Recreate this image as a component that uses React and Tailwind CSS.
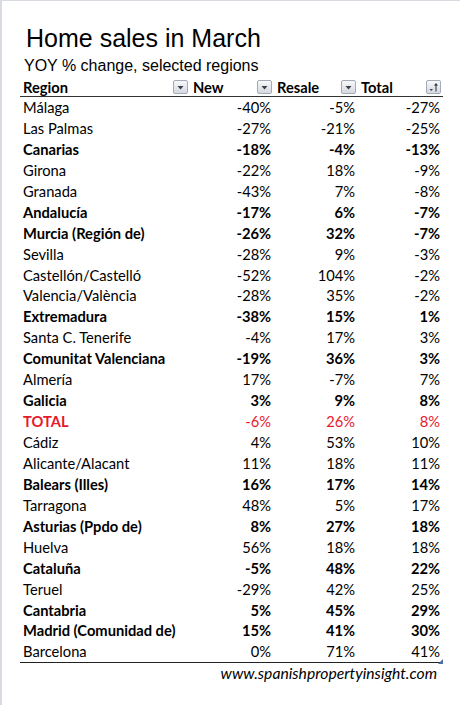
import React from 'react';

const rows = [
  ['Málaga', '-40%', '-5%', '-27%'],
  ['Las Palmas', '-27%', '-21%', '-25%'],
  ['Canarias', '-18%', '-4%', '-13%', 'b'],
  ['Girona', '-22%', '18%', '-9%'],
  ['Granada', '-43%', '7%', '-8%'],
  ['Andalucía', '-17%', '6%', '-7%', 'b'],
  ['Murcia (Región de)', '-26%', '32%', '-7%', 'b'],
  ['Sevilla', '-28%', '9%', '-3%'],
  ['Castellón/Castelló', '-52%', '104%', '-2%'],
  ['Valencia/València', '-28%', '35%', '-2%'],
  ['Extremadura', '-38%', '15%', '1%', 'b'],
  ['Santa C. Tenerife', '-4%', '17%', '3%'],
  ['Comunitat Valenciana', '-19%', '36%', '3%', 'b'],
  ['Almería', '17%', '-7%', '7%'],
  ['Galicia', '3%', '9%', '8%', 'b'],
  ['TOTAL', '-6%', '26%', '8%', 'total'],
  ['Cádiz', '4%', '53%', '10%'],
  ['Alicante/Alacant', '11%', '18%', '11%'],
  ['Balears (Illes)', '16%', '17%', '14%', 'b'],
  ['Tarragona', '48%', '5%', '17%'],
  ['Asturias (Ppdo de)', '8%', '27%', '18%', 'b'],
  ['Huelva', '56%', '18%', '18%'],
  ['Cataluña', '-5%', '48%', '22%', 'b'],
  ['Teruel', '-29%', '42%', '25%'],
  ['Cantabria', '5%', '45%', '29%', 'b'],
  ['Madrid (Comunidad de)', '15%', '41%', '30%', 'b'],
  ['Barcelona', '0%', '71%', '41%'],
];

const FilterButton = ({ sort }) => (
  <span className="flex h-[14px] w-[15px] items-center justify-center rounded-[2px] border border-[#a3abb8] bg-gradient-to-b from-[#f7f8fa] to-[#d5d9e0]">
    {sort ? (
      <svg width="11" height="11" viewBox="0 0 11 11">
        <path d="M1.5 7 L5 7 L3.25 9 Z" fill="#3a3f48" />
        <path d="M8 9.5 V2 M6.6 3.6 L8 1.8 L9.4 3.6" stroke="#3a3f48" strokeWidth="1.1" fill="none" />
      </svg>
    ) : (
      <svg width="9" height="9" viewBox="0 0 9 9">
        <path d="M1.5 3 L7.5 3 L4.5 6.5 Z" fill="#3a3f48" />
      </svg>
    )}
  </span>
);

const HeaderCell = ({ label, sort }) => (
  <div className="flex items-center justify-between pl-[3px] pr-[2px]">
    <span className="leading-[22px]">{label}</span>
    <FilterButton sort={sort} />
  </div>
);

const App = () => {
  return (
    <div className="h-[705px] w-[460px] overflow-hidden border-l-2 border-t border-[#d9dbe2] bg-white pl-[18px] text-black">
      <div className="pt-[23px] pl-[6px] font-['Liberation_Sans',Arial,sans-serif] text-[25px] leading-[28px]">
        Home sales in March
      </div>
      <div className="mt-[4px] pl-[4px] font-['Liberation_Sans',Arial,sans-serif] text-[16px] leading-[20px]">
        YOY % change, selected regions
      </div>
      <div className="w-[423px] font-['Lato','Noto_Sans',sans-serif] text-[14.7px]">
        <div className="grid h-[21px] grid-cols-[170px_84px_84px_85px] border-b-[1.5px] border-[#333] font-bold">
          <HeaderCell label="Region" />
          <HeaderCell label="New" />
          <HeaderCell label="Resale" />
          <HeaderCell label="Total" sort />
        </div>
        <div className="relative border-b-[1.5px] border-[#222]">
          {rows.map(([name, a, b, c, kind]) => {
            const isTotal = kind === 'total';
            const bold = kind === 'b';
            return (
              <div
                key={name}
                className={`grid h-[20.95px] grid-cols-[170px_84px_84px_85px] leading-[21px] ${isTotal ? 'text-[#e8182c]' : ''} ${bold ? 'font-bold' : ''}`}
              >
                <div className={`pl-[3px] ${isTotal ? 'font-bold' : ''}`}>{name}</div>
                <div className="pr-[3px] text-right">{a}</div>
                <div className="pr-[3px] text-right">{b}</div>
                <div className="pr-[3px] text-right">{c}</div>
              </div>
            );
          })}
          <svg className="absolute -bottom-[2px] right-0" width="5" height="5" viewBox="0 0 5 5">
            <path d="M5 0 V5 H0 Z" fill="#4a6ea8" />
          </svg>
        </div>
        <div className="pr-[6px] text-right font-['Lato','Noto_Sans',sans-serif] text-[15.7px] italic leading-[20px]">
          www.spanishpropertyinsight.com
        </div>
      </div>
    </div>
  );
};

export default App;
